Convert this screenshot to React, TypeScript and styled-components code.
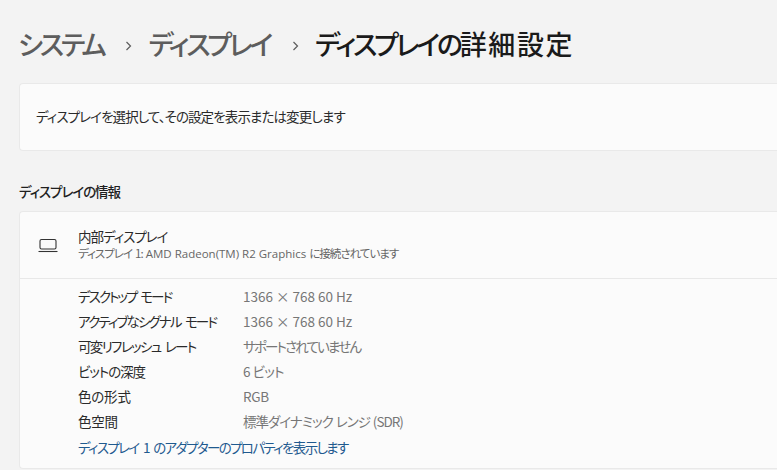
import React from 'react'
import styled, { createGlobalStyle } from 'styled-components'

// letter-spacing per string, the kana in the reference font run much narrower
const rows = [
    { label: 'デスクトップ モード', labelTight: 2, value: '1366 × 768 60 Hz', valueTight: 0 },
    { label: 'アクティブなシグナル モード', labelTight: 1.85, value: '1366 × 768 60 Hz', valueTight: 0 },
    { label: '可変リフレッシュ レート', labelTight: 1.65, value: 'サポートされていません', valueTight: 1.85 },
    { label: 'ビットの深度', labelTight: 1.1, value: '6 ビット', valueTight: 0.8 },
    { label: '色の形式', labelTight: 0.2, value: 'RGB', valueTight: 0.3 },
    { label: '色空間', labelTight: 0.2, value: '標準ダイナミック レンジ (SDR)', valueTight: 1 },
]

export default function App() {
    return <Page>
        <Global />
        <Breadcrumb>
            <Crumb>システム</Crumb>
            <Chevron />
            <Crumb>ディスプレイ</Crumb>
            <Chevron />
            <Crumb $current>ディスプレイの<Kanji>詳細設定</Kanji></Crumb>
        </Breadcrumb>

        <SelectCard>ディスプレイを選択して、その設定を表示または変更します</SelectCard>

        <SectionTitle>ディスプレイの情報</SectionTitle>

        <InfoCard>
            <InfoHead>
                <LaptopIcon />
                <HeadText>
                    <HeadName>内部ディスプレイ</HeadName>
                    <HeadSub>ディスプレイ 1: <Latin>AMD Radeon(TM) R2 Graphics</Latin> に接続されています</HeadSub>
                </HeadText>
            </InfoHead>
            <InfoBody>
                {rows.map((r) => <Row key={r.label}>
                    <Label $tight={r.labelTight}>{r.label}</Label>
                    <Value $tight={r.valueTight}>{r.value}</Value>
                </Row>)}
                <AdapterLink>ディスプレイ 1 のアダプターのプロパティを表示します</AdapterLink>
            </InfoBody>
        </InfoCard>
    </Page>
}

function Chevron() {
    return <ChevronSvg viewBox="0 0 7 10" width="7" height="10">
        <path d="M1.5 1 L5.5 5 L1.5 9" fill="none" stroke="#5c5c5c" strokeWidth="1.2" />
    </ChevronSvg>
}

function LaptopIcon() {
    return <IconSvg viewBox="0 0 20 15" width="20" height="15">
        <path d="M3.5 1.5 H16.5 A1.5 1.5 0 0 1 18 3 V9.5 A1.5 1.5 0 0 1 16.5 11 H3.5 A1.5 1.5 0 0 1 2 9.5 V3 A1.5 1.5 0 0 1 3.5 1.5 Z" fill="none" stroke="#333" strokeWidth="1.1" />
        <path d="M0.5 13.5 H19.5" fill="none" stroke="#333" strokeWidth="1.1" />
    </IconSvg>
}

const Global = createGlobalStyle`
html, body {
    margin: 0;
    padding: 0;
    background: #f3f3f3;
    overflow: hidden;
}
`

const Page = styled.div`
width: 777px;
height: 470px;
overflow: hidden;
background: #f3f3f3;
padding-left: 19px;
box-sizing: border-box;
font-family: "Noto Sans CJK JP", "Open Sans", sans-serif;
font-feature-settings: "palt";
color: #1b1b1b;
`

const Breadcrumb = styled.div`
display: flex;
align-items: center;
height: 83px;
padding-top: 5px;
margin-left: -1px;
box-sizing: border-box;
`

const Crumb = styled.span<{ $current?: boolean }>`
font-size: 27px;
line-height: 36px;
font-weight: 500;
letter-spacing: -3.2px;
color: ${(p) => (p.$current ? '#1a1a1a' : '#5d5d5d')};
`

const Kanji = styled.span`
letter-spacing: 1.6px;
`

const ChevronSvg = styled.svg`
margin: 3px 16px 0 22px;
flex-shrink: 0;
`

const Card = styled.div`
background: #fbfbfb;
border: 1px solid #e9e9e9;
border-right: none;
border-radius: 4px 0 0 4px;
box-sizing: border-box;
width: 780px;
`

const SelectCard = styled(Card)`
height: 68px;
display: flex;
align-items: center;
padding-left: 16px;
padding-bottom: 3px;
font-size: 13.5px;
letter-spacing: -0.9px;
color: #2a2a2a;
`

const SectionTitle = styled.div`
font-size: 13.5px;
line-height: 20px;
font-weight: 500;
letter-spacing: -1.05px;
margin-top: 30px;
margin-bottom: 10px;
color: #1f1f1f;
`

const InfoCard = styled(Card)`
height: 258px;
`

const InfoHead = styled.div`
display: flex;
align-items: center;
height: 67px;
padding-left: 18px;
padding-bottom: 2px;
box-sizing: border-box;
border-bottom: 1px solid #e8e8e8;
`

const IconSvg = styled.svg`
flex-shrink: 0;
margin-right: 20px;
margin-top: 3px;
`

const HeadText = styled.div`
display: flex;
flex-direction: column;
`

const HeadName = styled.div`
font-size: 13.5px;
line-height: 18px;
letter-spacing: -1px;
color: #2a2a2a;
`

const HeadSub = styled.div`
font-size: 11.5px;
line-height: 16px;
letter-spacing: -1px;
word-spacing: 1.5px;
color: #666;
`

const Latin = styled.span`
font-family: "Open Sans", sans-serif;
font-size: 11.5px;
letter-spacing: 0;
word-spacing: 0;
`

const InfoBody = styled.div`
display: flex;
flex-direction: column;
padding: 4px 0 0 58px;
`

const Row = styled.div`
display: grid;
grid-template-columns: 165px 1fr;
height: 25.1px;
align-items: center;
`

const Label = styled.div<{ $tight: number }>`
font-size: 13.5px;
line-height: 20px;
letter-spacing: ${(p) => -p.$tight}px;
word-spacing: 3px;
color: #2a2a2a;
white-space: nowrap;
`

const Value = styled.div<{ $tight: number }>`
font-size: 13.5px;
line-height: 20px;
letter-spacing: ${(p) => -p.$tight}px;
word-spacing: ${(p) => p.$tight}px;
color: #767676;
`

const AdapterLink = styled.a`
font-size: 13.5px;
line-height: 26px;
letter-spacing: -1.65px;
word-spacing: 3px;
color: #1f5a8f;
cursor: pointer;
`
